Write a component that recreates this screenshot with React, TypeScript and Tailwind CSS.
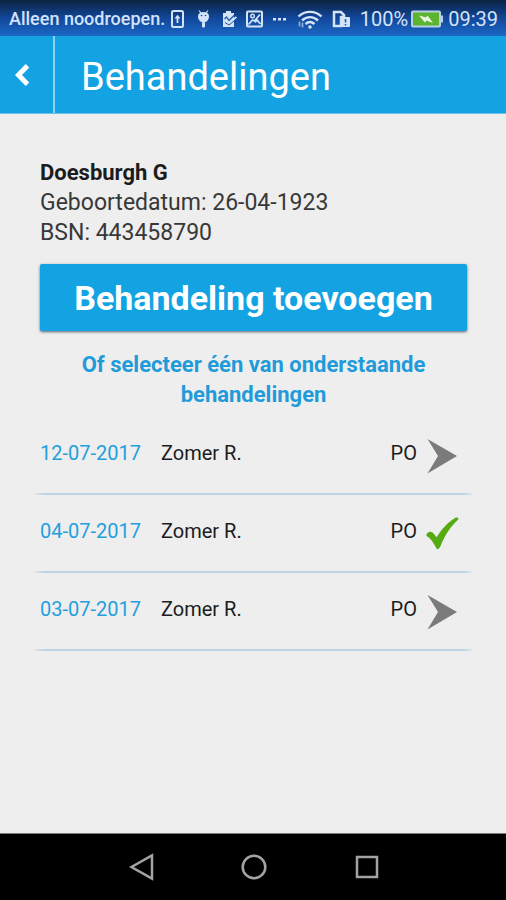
import React from 'react';

type TreatmentStatus = 'open' | 'done';

interface Treatment {
  date: string;
  therapist: string;
  code: string;
  status: TreatmentStatus;
}

const treatments: Treatment[] = [
  { date: '12-07-2017', therapist: 'Zomer R.', code: 'PO', status: 'open' },
  { date: '04-07-2017', therapist: 'Zomer R.', code: 'PO', status: 'done' },
  { date: '03-07-2017', therapist: 'Zomer R.', code: 'PO', status: 'open' },
];

const StatusBar: React.FC = () => (
  <div className="flex h-9 items-center bg-linear-to-b from-[#0a2342] via-[#12479a] to-[#1b68c6] pt-0.5 pr-2 pl-[9px] text-[#d3e3f8]">
    <span className="text-lg font-medium whitespace-nowrap">Alleen noodroepen.</span>

    <div className="ml-1.5 mr-2.5 flex flex-1 items-center justify-between">
      {/* sim / upload */}
      <svg className="h-[18px] w-[13px] shrink-0" viewBox="0 0 13 18" fill="none" stroke="currentColor">
        <rect x="1" y="1" width="11" height="16" rx="1.5" strokeWidth="2" />
        <path d="M6.500 13V7" strokeWidth="1.800" />
        <path d="M3.500 8.500l3-3.800 3 3.800z" fill="currentColor" stroke="none" />
      </svg>
      {/* android debug */}
      <svg className="mx-[3px] h-[18px] w-[13px] shrink-0" viewBox="0 0 13 18" fill="currentColor">
        <path d="M1 6.500C1 3.500 3 2 6.500 2S12 3.500 12 6.500 9.500 12.500 6.500 12.500 1 9.500 1 6.500z" />
        <path d="M2 .5l2 2.500M11 .5L9 3" stroke="currentColor" strokeWidth="1.200" />
        <rect x="5" y="12" width="3" height="5.500" rx="1" />
        <circle cx="4.500" cy="5.500" r=".8" fill="#154b9c" />
        <circle cx="8.500" cy="5.500" r=".8" fill="#154b9c" />
      </svg>
      {/* clipboard */}
      <svg className="h-[18px] w-[15px] shrink-0" viewBox="0 0 15 18" fill="none">
        <path d="M1 3h3V1h5v2h3v14H1z" fill="currentColor" />
        <path d="M2.500 9l2-2 2.500 3.500L12.500 5" stroke="#1a56ab" strokeWidth="1.200" />
        <path d="M4 10.500l3 2.500 7.500-6" stroke="currentColor" strokeWidth="1.800" />
        <path d="M3 12.500l4 2.500 5-4" stroke="#1a56ab" strokeWidth="1" />
      </svg>
      {/* picture */}
      <svg className="h-[18px] w-[17px] shrink-0" viewBox="0 0 17 18" fill="none" stroke="currentColor">
        <rect x="1" y="1.500" width="15" height="15" rx="1" strokeWidth="2" />
        <circle cx="6.500" cy="6" r="1.800" strokeWidth="1.400" />
        <path d="M2.500 14.500l4-4.500 2 1L14 4.500M9 12.500l2-2.500 3.500 4" strokeWidth="1.800" />
      </svg>
      <svg className="h-1 w-[15px] shrink-0" viewBox="0 0 15 4" fill="currentColor">
        <rect x="1" y="1" width="3" height="2.500" />
        <rect x="6" y="1" width="3" height="2.500" />
        <rect x="11" y="1" width="3" height="2.500" />
      </svg>
      {/* wifi */}
      <svg className="h-[19px] w-[26px] shrink-0" viewBox="0 0 26 19" fill="none" stroke="currentColor" strokeWidth="2.400">
        <path d="M1.500 6.500C8 .3 18 .3 24.500 6.500" />
        <path d="M5 10.500c4.800-4.500 11.200-4.500 16 0" />
        <path d="M8.500 14c3-2.600 6-2.600 9 0" />
        <circle cx="13" cy="17" r="1.800" fill="currentColor" stroke="none" />
        <path d="M2.500 11.500v5M5.500 12.500v5" strokeWidth="1.800" opacity=".6" />
      </svg>
      {/* sim card warning */}
      <svg className="h-[18px] w-[18px] shrink-0" viewBox="0 0 18 18" fill="none">
        <path d="M2 16V2h7l3 3v2H9v9z" stroke="currentColor" strokeWidth="2.500" />
        <rect x="9" y="7" width="9" height="10" rx="1" fill="currentColor" />
        <path d="M13.500 9v3.500M13.500 14v1.500" stroke="#1a56ab" strokeWidth="1.500" />
      </svg>
    </div>

    <div className="flex items-center gap-[3px]">
      <span className="text-xl">100%</span>
      <svg className="h-[18px] w-8 shrink-0" viewBox="0 0 32 18">
        <rect x="1" y="1.500" width="28" height="15" rx="1" fill="#5cb531" stroke="#b9d0e6" strokeWidth="2" />
        <rect x="30" y="5.500" width="2" height="7" fill="#b9d0e6" />
        <path d="M8 5.500l7 2 1.500-2 5.500 7.500-6.500-2.500-1.500 2z" fill="#eef8ea" />
      </svg>
      <span className="pl-0.5 text-xl">09:39</span>
    </div>
  </div>
);

const Header: React.FC = () => (
  <header className="flex h-[78px] border-b border-[#6cc0ea] bg-[#13a3e3] text-white">
    <button
      type="button"
      aria-label="Terug"
      className="flex w-[55px] items-center border-r-2 border-[#8fd2f2] pl-[15px]"
    >
      <svg className="h-[22px] w-[15px]" viewBox="0 0 15 22" fill="none" stroke="currentColor" strokeWidth="5">
        <path d="M12.500 1.800L3.500 11l9 9.200" />
      </svg>
    </button>
    <h1 className="flex items-center pt-1 pl-[26px] text-[38px] leading-none">Behandelingen</h1>
  </header>
);

const StatusIcon: React.FC<{ status: TreatmentStatus }> = ({ status }) => {
  if (status === 'done') {
    return (
      <svg className="h-9 w-9" viewBox="0 0 36 36" fill="#56aa12">
        <path d="M2.500 18.500c1-2.500 4-3.500 6-2 1.500 1.200 2.800 3 4 4.800C18 13 24 6 31.500 1.800c1.500-.8 3.500.2 2.800 1.700C27 10 21.500 18 16.500 30c-.7 1.800-2.500 4.500-4 2.500C10 28 7.500 23 3.200 20.500c-.7-.5-1-1.200-.7-2z" />
      </svg>
    );
  }
  return (
    <svg className="h-9 w-9" viewBox="0 0 36 36" fill="#7b7b7b">
      <path d="M3.500 1L33 18 3.500 35.500 14 18z" />
    </svg>
  );
};

const TreatmentRow: React.FC<{ treatment: Treatment }> = ({ treatment }) => (
  <li className="-mx-[5px]">
    <button type="button" className="flex h-[76px] w-full px-[5px] pt-[21px] text-left text-xl">
      <span className="w-[121px] pt-px text-[#239fde]">{treatment.date}</span>
      <span className="flex-1 pt-px">{treatment.therapist}</span>
      <span className="pt-px">{treatment.code}</span>
      <span className="px-[7px]">
        <StatusIcon status={treatment.status} />
      </span>
    </button>
    <div className="h-0.5 bg-[linear-gradient(to_right,#e2e4e5,#bdd5e2_2%,#bdd5e2_98%,#e2e4e5)]" />
  </li>
);

const NavBar: React.FC = () => (
  <nav className="flex h-[67px] items-center justify-center gap-[85px] border-t border-[#777777] bg-black pl-0.5 text-[#a3a3a3]">
    <button type="button" aria-label="Vorige">
      <svg className="h-7 w-7" viewBox="0 0 28 28" fill="none" stroke="currentColor" strokeWidth="2.500">
        <path d="M25 2.500v23L4.500 14z" />
      </svg>
    </button>
    <button type="button" aria-label="Startscherm">
      <svg className="h-7 w-7" viewBox="0 0 28 28" fill="none" stroke="currentColor" strokeWidth="2.500">
        <circle cx="14" cy="14" r="11.300" />
      </svg>
    </button>
    <button type="button" aria-label="Recente apps">
      <svg className="h-7 w-7" viewBox="0 0 28 28" fill="none" stroke="currentColor" strokeWidth="2.500">
        <rect x="4" y="4" width="20" height="20" />
      </svg>
    </button>
  </nav>
);

const App: React.FC = () => {
  return (
    <div className="flex min-h-screen flex-col bg-[#eeeeee] font-['Roboto',sans-serif] text-[#1c1c1c]">
      <StatusBar />
      <Header />

      <main className="flex-1 pt-11 pr-[39px] pl-10">
        <section className="text-[23px] leading-[30px]">
          <h2 className="text-[22px] font-bold">Doesburgh G</h2>
          <p className="text-[#383838]">Geboortedatum: 26-04-1923</p>
          <p className="text-[#383838]">BSN: 443458790</p>
        </section>

        <button
          type="button"
          className="mt-4 flex h-[67px] w-full items-center justify-center rounded-xs bg-[#13a3e3] pt-0.5 text-[34px] font-bold text-white shadow-sm shadow-gray-500"
        >
          Behandeling toevoegen
        </button>

        <p className="mt-[19px] text-center text-[22px] leading-[30px] font-bold text-[#1f9bda]">
          Of selecteer één van onderstaande behandelingen
        </p>

        <ul className="mt-[7px]">
          {treatments.map((treatment) => (
            <TreatmentRow key={treatment.date} treatment={treatment} />
          ))}
        </ul>
      </main>

      <NavBar />
    </div>
  );
};

export default App;
